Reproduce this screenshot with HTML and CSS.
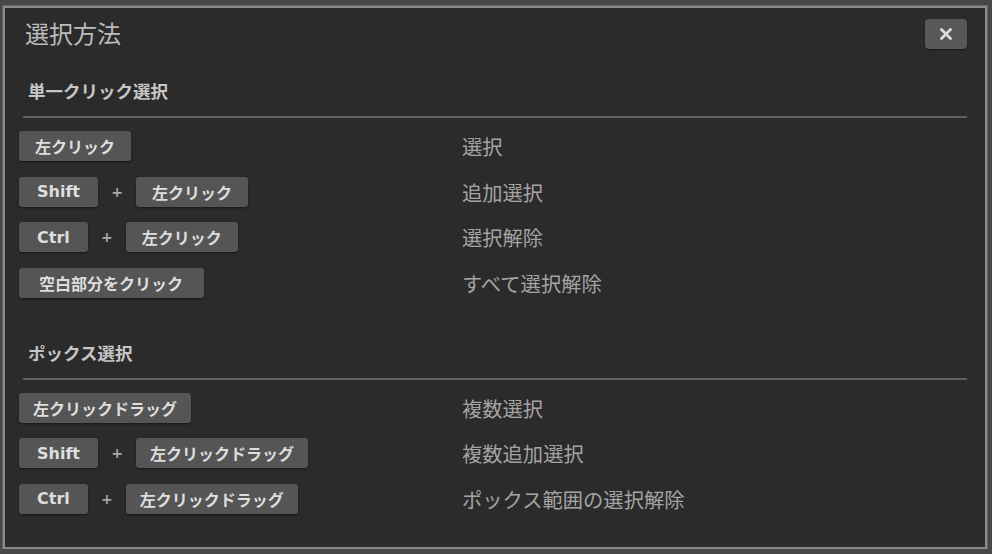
FILE: index.html
```html
<!DOCTYPE html>
<html lang="ja">
<head>
    <meta charset="UTF-8">
    <title>選択方法</title>
    <link rel="stylesheet" href="styles.css">
</head>
<body>
    <div class="dialog">
        <div class="dialog-header">
            <h1 class="dialog-title">選択方法</h1>
            <button class="close-btn" aria-label="閉じる">
                <svg width="12" height="12" viewBox="0 0 12 12">
                    <path d="M1.5 1.5 L10.5 10.5 M10.5 1.5 L1.5 10.5" stroke="#dcdcdc" stroke-width="2.8" stroke-linecap="round"/>
                </svg>
            </button>
        </div>

        <div class="section">
            <h2 class="section-title">単一クリック選択</h2>
            <div class="rows">
                <div class="row">
                    <div class="keys"><span class="key">左クリック</span></div>
                    <div class="desc">選択</div>
                </div>
                <div class="row">
                    <div class="keys"><span class="key latin">Shift</span><span class="plus">+</span><span class="key">左クリック</span></div>
                    <div class="desc">追加選択</div>
                </div>
                <div class="row">
                    <div class="keys"><span class="key latin">Ctrl</span><span class="plus">+</span><span class="key">左クリック</span></div>
                    <div class="desc">選択解除</div>
                </div>
                <div class="row">
                    <div class="keys"><span class="key wide">空白部分をクリック</span></div>
                    <div class="desc">すべて選択解除</div>
                </div>
            </div>
        </div>

        <div class="section second">
            <h2 class="section-title">ポックス選択</h2>
            <div class="rows">
                <div class="row">
                    <div class="keys"><span class="key drag">左クリックドラッグ</span></div>
                    <div class="desc">複数選択</div>
                </div>
                <div class="row">
                    <div class="keys"><span class="key latin">Shift</span><span class="plus">+</span><span class="key drag">左クリックドラッグ</span></div>
                    <div class="desc">複数追加選択</div>
                </div>
                <div class="row">
                    <div class="keys"><span class="key latin">Ctrl</span><span class="plus">+</span><span class="key drag">左クリックドラッグ</span></div>
                    <div class="desc">ポックス範囲の選択解除</div>
                </div>
            </div>
        </div>
    </div>
</body>
</html>
```

FILE: styles.css
```css
body {
    margin: 0;
    padding: 6px 0 0 3px;
    background-color: #484848;
    font-family: 'Noto Sans CJK JP', sans-serif;
}

.dialog {
    box-sizing: border-box;
    width: 984px;
    height: 543px;
    padding: 11px 18px 0 14px;
    background: #2b2b2b;
    border: 2px solid #8a8a8a;
    box-shadow: 0 0 0 1px #666;
}

.dialog-header {
    display: flex;
    justify-content: space-between;
    align-items: center;
    height: 30px;
}

.dialog-title {
    margin: -3px 0 0 6px;
    font-size: 24px;
    font-weight: normal;
    line-height: 30px;
    color: #bcbcbc;
}

.close-btn {
    width: 42px;
    height: 30px;
    padding: 0;
    border: none;
    border-radius: 4px;
    background: #585858;
    display: flex;
    align-items: center;
    justify-content: center;
    box-shadow: 0 1px 2px rgba(0,0,0,0.4);
}

.section {
    margin-top: 30px;
}

.section.second {
    margin-top: 43px;
}

.section-title {
    margin: 0 0 0 4px;
    padding: 0 0 13px 5px;
    font-size: 17.5px;
    line-height: 24px;
    font-weight: bold;
    color: #c6c6c6;
    border-bottom: 2px solid #5e5e5e;
}

.rows {
    display: flex;
    flex-direction: column;
    gap: 15.5px;
    margin-top: 13px;
}

.row {
    display: grid;
    grid-template-columns: 443px 1fr;
    align-items: center;
}

.keys {
    display: flex;
    align-items: center;
}

.key {
    height: 30px;
    padding: 0 16px;
    display: flex;
    align-items: center;
    border-radius: 3px;
    background: #555;
    color: #dedede;
    font-family: 'DejaVu Sans', 'Noto Sans CJK JP', sans-serif;
    font-size: 16px;
    font-weight: bold;
    box-shadow: 0 1px 2px rgba(0,0,0,0.45);
}

.key.latin {
    padding: 0 18px;
}

.key.wide {
    padding: 0 21px 0 20px;
}

.key.drag {
    padding: 0 14px;
}

.plus {
    width: 38px;
    text-align: center;
    color: #a8a8a8;
    font-family: 'DejaVu Sans', sans-serif;
    font-size: 14px;
    font-weight: bold;
}

.desc {
    font-size: 20.3px;
    line-height: 30px;
    color: #a4a4a4;
}
```
